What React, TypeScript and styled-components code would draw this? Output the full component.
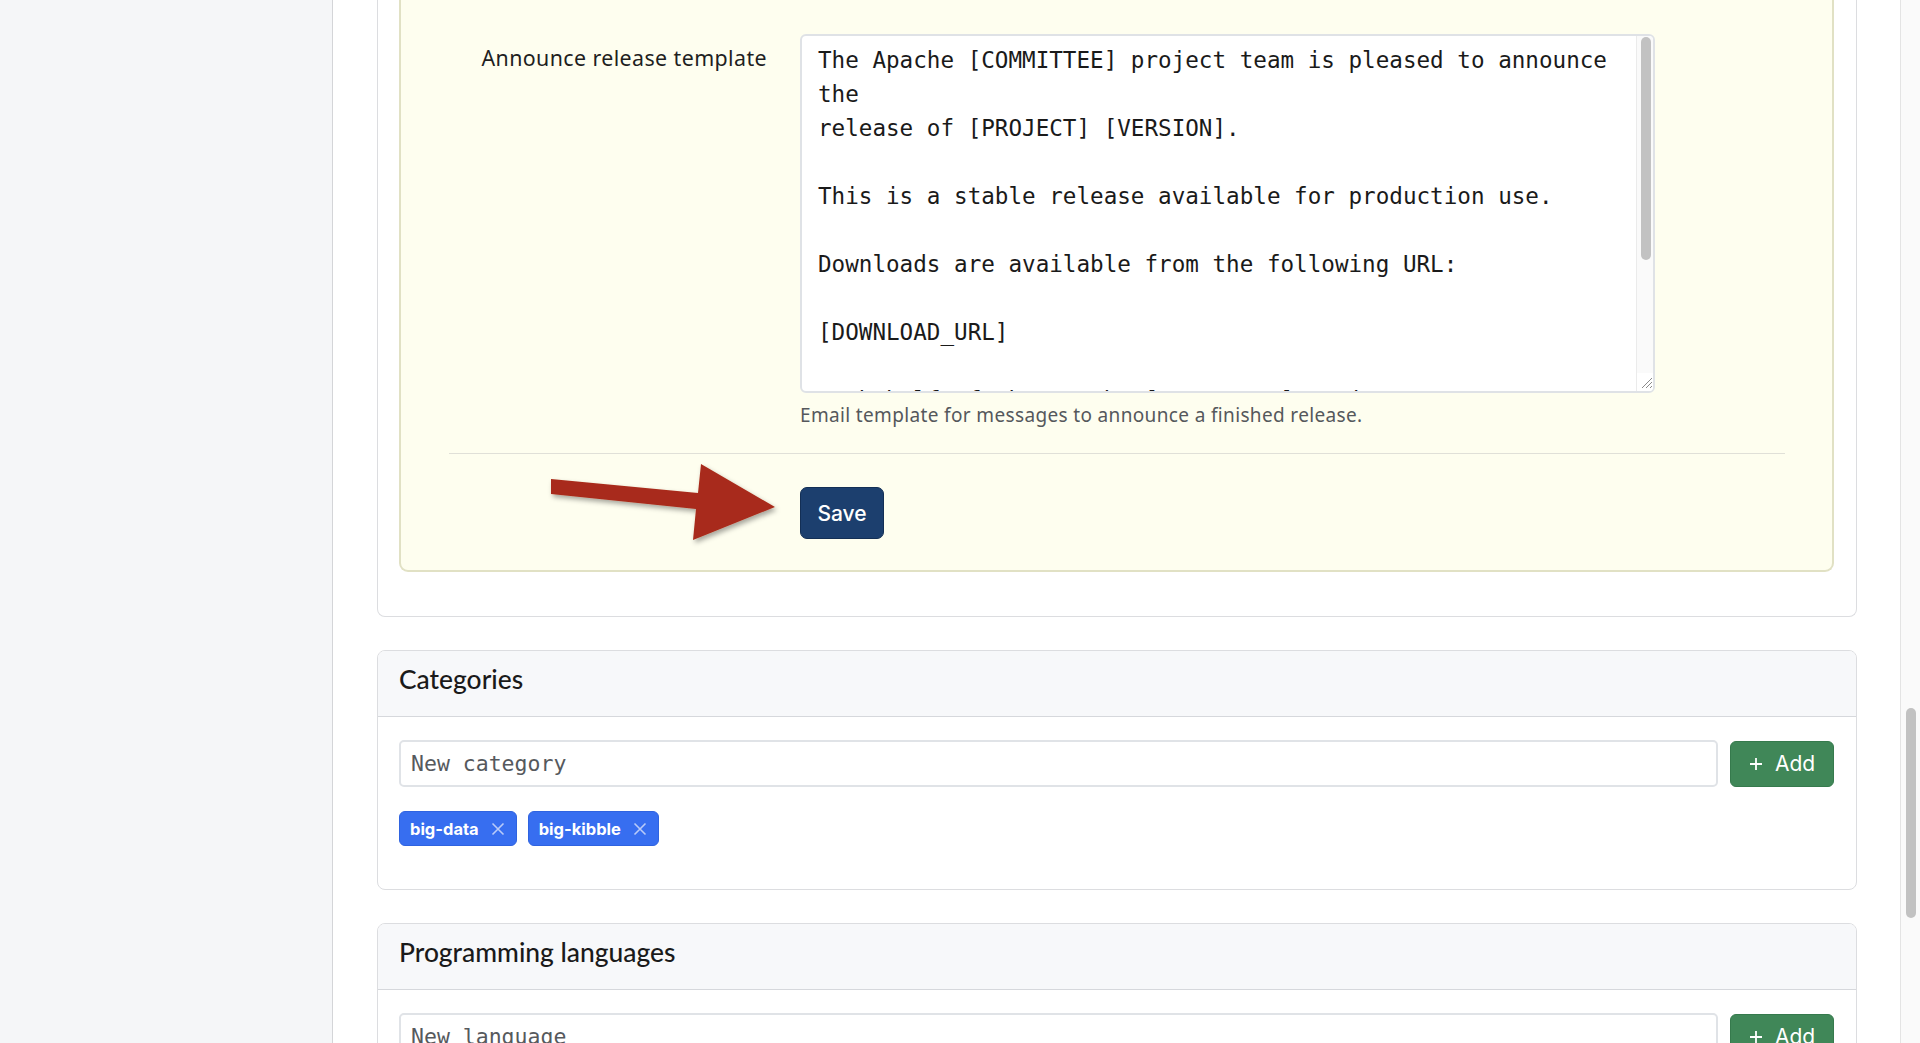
import React from "react";
import styled, { createGlobalStyle } from "styled-components";

const GlobalStyle = createGlobalStyle`
  html, body { margin: 0; padding: 0; height: 100%; overflow: hidden; background: #ffffff; }
  body { font-family: "Noto Sans", "Lato", sans-serif; color: #1d1d1f; }
  * { box-sizing: border-box; }
`;

const Shell = styled.div`
  display: flex;
  height: 1043px;
  width: 1920px;
  overflow: hidden;
`;

const Sidebar = styled.aside`
  width: 333px;
  flex: 0 0 333px;
  background: #f5f6f8;
  border-right: 1px solid #d4d5d8;
`;

const Main = styled.main`
  flex: 1;
  min-width: 0;
  padding: 0 43px 0 44px;
  background: #ffffff;
  display: flex;
  flex-direction: column;
  gap: 33px;
`;

const ScrollTrack = styled.div<{ $page?: boolean }>`
  display: flex;
  flex-direction: column;
  align-items: center;
  background: #fafafa;
  border-left: 1px solid ${(p) => (p.$page ? "#e4e4e4" : "#ebebeb")};
  width: ${(p) => (p.$page ? "20px" : "17px")};
  flex: 0 0 ${(p) => (p.$page ? "20px" : "17px")};
  padding-left: 1px;
`;

const ScrollThumb = styled.div<{ $top: number; $height: number }>`
  margin-top: ${(p) => p.$top}px;
  width: 10px;
  height: ${(p) => p.$height}px;
  border-radius: 5px;
  background: #c2c2c2;
`;

const Card = styled.section<{ $clipped?: boolean }>`
  border: 1px solid #dcdde0;
  border-radius: 8px;
  background: #ffffff;
  overflow: hidden;
  flex-shrink: 0;
  ${(p) =>
    p.$clipped &&
    `
    border-top: none;
    border-top-left-radius: 0;
    border-top-right-radius: 0;
  `}
`;

const SettingsBody = styled.div`
  padding: 0 22px 44px 21px;
`;

const FormPanel = styled.form`
  background: #fefeef;
  border: 2px solid #e1e1c4;
  border-top: none;
  border-radius: 0 0 9px 9px;
  padding: 34px 47px 20px 48px;
`;

const FieldRow = styled.div`
  display: grid;
  grid-template-columns: 334px 1fr;
`;

const FieldLabel = styled.label`
  text-align: right;
  padding: 9px 16px 0 0;
  font-family: "Noto Sans", sans-serif;
  font-size: 21.4px;
  letter-spacing: 0.4px;
  line-height: 30px;
  color: #1f1f1f;
`;

const FieldControl = styled.div`
  padding-left: 17px;
  display: flex;
  flex-direction: column;
  align-items: flex-start;
`;

const TextFrame = styled.div`
  width: 855px;
  height: 359px;
  border: 2px solid #dfe2e6;
  border-radius: 6px;
  background: #ffffff;
  display: flex;
  overflow: hidden;
`;

const TemplateArea = styled.textarea`
  flex: 1;
  min-width: 0;
  height: 100%;
  border: none;
  background: transparent;
  padding: 7px 16px 7px 16px;
  font-family: "DejaVu Sans Mono", "Liberation Mono", monospace;
  font-size: 22.6px;
  line-height: 34px;
  color: #1a1a1a;
  resize: none;
  outline: none;
  overflow: hidden;
`;

const TrackFill = styled.div`
  flex: 1;
  display: flex;
  flex-direction: column;
  align-items: center;
`;

const Resizer = styled.svg`
  flex: 0 0 18px;
  width: 17px;
  height: 18px;
  background: #ffffff;
  margin-left: -1px;
  stroke: #8a8a8a;
  stroke-width: 1;
`;

const HelpText = styled.div`
  margin-top: 9px;
  font-family: "Noto Sans", sans-serif;
  font-size: 19px;
  letter-spacing: 0.35px;
  line-height: 26px;
  color: #55585c;
`;

const Divider = styled.hr`
  border: none;
  border-top: 1px solid #e0e0d8;
  margin: 25px 0 6px 0;
`;

const ArrowCell = styled.div`
  display: flex;
  justify-content: flex-end;
`;

const ButtonCell = styled.div`
  padding: 27px 0 0 17px;
`;

const SaveButton = styled.button`
  width: 84px;
  height: 52px;
  border: 1px solid #132f55;
  border-radius: 7px;
  background: #1c3f6e;
  color: #ffffff;
  font-family: "Inter", "Liberation Sans", sans-serif;
  font-size: 21px;
  font-weight: 500;
  cursor: pointer;
`;

const CardHeader = styled.header`
  height: 66px;
  display: flex;
  align-items: center;
  padding: 0 21px 9px;
  background: #f7f8fa;
  border-bottom: 1px solid #d6d8dc;
`;

const CardTitle = styled.h2`
  margin: 0;
  font-family: "Lato", sans-serif;
  font-size: 26.4px;
  font-weight: 500;
  color: #1a1a1a;
`;

const CardBody = styled.div`
  padding: 23px 22px 43px 21px;
  display: flex;
  flex-direction: column;
  gap: 24px;
`;

const AddRow = styled.div`
  display: flex;
  gap: 12px;
  align-items: center;
`;

const TextInput = styled.input`
  flex: 1;
  height: 47px;
  border: 2px solid #e0e3e7;
  border-radius: 5px;
  padding: 0 10px;
  font-family: "DejaVu Sans Mono", "Liberation Mono", monospace;
  font-size: 21.5px;
  color: #222;
  outline: none;
  &::placeholder {
    color: #56595d;
  }
`;

const AddButton = styled.button`
  flex: 0 0 104px;
  height: 46px;
  border: 1px solid #367a4d;
  border-radius: 6px;
  background: #408758;
  color: #ffffff;
  font-family: "Inter", "Liberation Sans", sans-serif;
  font-size: 21px;
  display: flex;
  align-items: center;
  justify-content: center;
  gap: 12px;
  cursor: pointer;
`;

const TagList = styled.div`
  display: flex;
  gap: 11px;
`;

const Tag = styled.span`
  display: inline-flex;
  align-items: center;
  gap: 12px;
  height: 35px;
  padding: 0 11px 0 10px;
  border-radius: 6px;
  background: #376ef0;
  border: 1px solid #2f63e0;
  color: #ffffff;
  font-family: "Inter", "Liberation Sans", sans-serif;
  font-weight: 700;
  font-size: 16.5px;
`;

const CloseX = styled.svg`
  width: 14px;
  height: 14px;
  stroke: #b9cbf8;
  stroke-width: 1.6;
`;

const PlusIcon = styled.svg`
  width: 14px;
  height: 14px;
  stroke: #ffffff;
  stroke-width: 1.8;
`;

const Arrow = () => (
  <svg width="236" height="90" viewBox="0 0 236 90">
    <defs>
      <filter id="arrowShadow" x="-10%" y="-20%" width="130%" height="150%">
        <feDropShadow dx="2" dy="3" stdDeviation="2.5" floodColor="#000" floodOpacity="0.35" />
      </filter>
    </defs>
    <polygon
      points="4,19 151,33 154,4 228,47 146,80 149,49 4,34"
      fill="#a82c1a"
      filter="url(#arrowShadow)"
    />
  </svg>
);

const templateText = `The Apache [COMMITTEE] project team is pleased to announce the
release of [PROJECT] [VERSION].

This is a stable release available for production use.

Downloads are available from the following URL:

[DOWNLOAD_URL]

On behalf of the Apache [COMMITTEE] project team,

[YOUR_FULL_NAME] ([YOUR_ASF_ID])
`;

const TagChip = ({ label }: { label: string }) => (
  <Tag>
    {label}
    <CloseX viewBox="0 0 14 14" fill="none">
      <path d="M1.5 1.5 L12.5 12.5 M12.5 1.5 L1.5 12.5" />
    </CloseX>
  </Tag>
);

const AddBlock = ({ placeholder }: { placeholder: string }) => (
  <AddRow>
    <TextInput placeholder={placeholder} />
    <AddButton type="button">
      <PlusIcon viewBox="0 0 14 14" fill="none">
        <path d="M7 1 V13 M1 7 H13" />
      </PlusIcon>
      Add
    </AddButton>
  </AddRow>
);

export default function App() {
  return (
    <>
      <GlobalStyle />
      <Shell>
        <Sidebar />
        <Main>
          <Card $clipped>
            <SettingsBody>
              <FormPanel onSubmit={(e) => e.preventDefault()}>
                <FieldRow>
                  <FieldLabel htmlFor="announce">Announce release template</FieldLabel>
                  <FieldControl>
                    <TextFrame>
                      <TemplateArea id="announce" defaultValue={templateText} spellCheck={false} />
                      <ScrollTrack>
                        <TrackFill>
                          <ScrollThumb $top={1} $height={223} />
                        </TrackFill>
                        <Resizer viewBox="0 0 17 18" fill="none">
                          <path d="M15 5 L5 15 M15 9 L9 15 M15 13 L13 15" />
                        </Resizer>
                      </ScrollTrack>
                    </TextFrame>
                    <HelpText>Email template for messages to announce a finished release.</HelpText>
                  </FieldControl>
                </FieldRow>
                <Divider />
                <FieldRow>
                  <ArrowCell>
                    <Arrow />
                  </ArrowCell>
                  <ButtonCell>
                    <SaveButton type="submit">Save</SaveButton>
                  </ButtonCell>
                </FieldRow>
              </FormPanel>
            </SettingsBody>
          </Card>

          <Card>
            <CardHeader>
              <CardTitle>Categories</CardTitle>
            </CardHeader>
            <CardBody>
              <AddBlock placeholder="New category" />
              <TagList>
                <TagChip label="big-data" />
                <TagChip label="big-kibble" />
              </TagList>
            </CardBody>
          </Card>

          <Card>
            <CardHeader>
              <CardTitle>Programming languages</CardTitle>
            </CardHeader>
            <CardBody>
              <AddBlock placeholder="New language" />
            </CardBody>
          </Card>
        </Main>
        <ScrollTrack $page>
          <ScrollThumb $top={708} $height={210} />
        </ScrollTrack>
      </Shell>
    </>
  );
}
